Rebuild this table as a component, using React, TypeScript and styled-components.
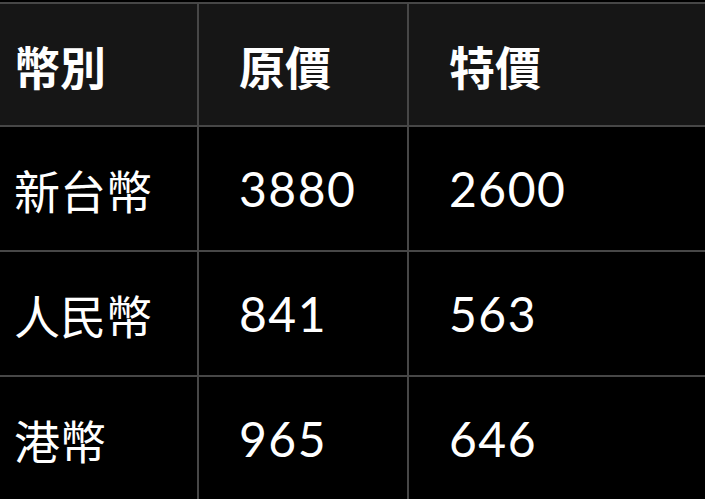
import React from 'react'
import styled, { createGlobalStyle } from 'styled-components'

type PriceRow = {
    currency: string
    original: string
    special: string
}

const rows: Array<PriceRow> = [
    { currency: '新台幣', original: '3880', special: '2600' },
    { currency: '人民幣', original: '841', special: '563' },
    { currency: '港幣', original: '965', special: '646' },
]

const GlobalStyle = createGlobalStyle`
    html, body {
        margin: 0;
        padding: 0;
        background: #000;
        overflow: hidden;
    }
`

const StyledPage = styled.div`
    padding-top: 2px;
    width: 705px;
    height: 499px;
    background: #000;
    font-family: Lato, 'Noto Sans CJK TC', sans-serif;
    color: #fff;
`

const StyledTable = styled.table`
    width: 100%;
    border-collapse: collapse;
    table-layout: fixed;
`

const StyledHeadRow = styled.tr`
    height: 123px;
    background: #161616;
    border-top: 2px solid #474747;
    border-bottom: 2px solid #474747;
`

const StyledRow = styled.tr`
    height: 125px;
    background: #000;
    border-bottom: 2px solid #474747;

    &:last-child {
        border-bottom: none;
    }
`

const StyledHeadCell = styled.th<{ $first?: boolean; $width?: number }>`
    width: ${(p) => (p.$width ? `${p.$width}px` : 'auto')};
    padding: 0 0 0 ${(p) => (p.$first ? '14px' : '40px')};
    text-align: left;
    vertical-align: middle;
    font-family: 'Noto Sans CJK TC', sans-serif;
    font-size: 46px;
    font-weight: 700;
    line-height: 1;
    border-left: ${(p) => (p.$first ? 'none' : '2px solid #474747')};
    box-sizing: border-box;
`

const StyledCell = styled.td<{ $first?: boolean }>`
    padding: 0 0 0 ${(p) => (p.$first ? '14px' : '40px')};
    text-align: left;
    vertical-align: middle;
    font-family: ${(p) =>
        p.$first ? "'Noto Sans CJK TC', sans-serif" : "Lato, 'Noto Sans CJK TC', sans-serif"};
    font-size: ${(p) => (p.$first ? '46px' : '48px')};
    font-weight: 400;
    letter-spacing: ${(p) => (p.$first ? '0' : '1.5px')};
    line-height: 1;
    border-left: ${(p) => (p.$first ? 'none' : '2px solid #474747')};
`

const App = () => {
    return (
        <StyledPage>
            <GlobalStyle />
            <StyledTable>
                <thead>
                    <StyledHeadRow>
                        <StyledHeadCell $first $width={198}>
                            幣別
                        </StyledHeadCell>
                        <StyledHeadCell $width={210}>原價</StyledHeadCell>
                        <StyledHeadCell>特價</StyledHeadCell>
                    </StyledHeadRow>
                </thead>
                <tbody>
                    {rows.map((row) => (
                        <StyledRow key={row.currency}>
                            <StyledCell $first>{row.currency}</StyledCell>
                            <StyledCell>{row.original}</StyledCell>
                            <StyledCell>{row.special}</StyledCell>
                        </StyledRow>
                    ))}
                </tbody>
            </StyledTable>
        </StyledPage>
    )
}

export default App
